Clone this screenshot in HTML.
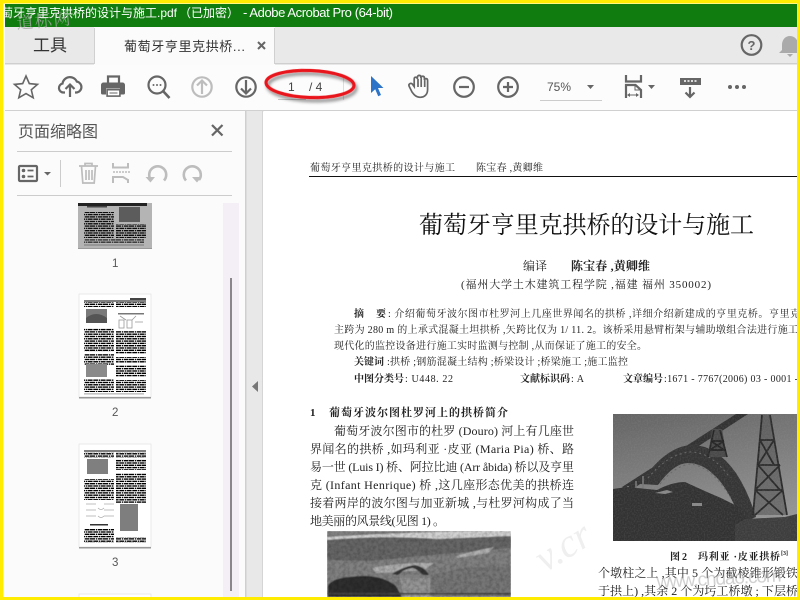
<!DOCTYPE html>
<html><head><meta charset="utf-8"><style>
html,body{margin:0;padding:0;background:#fff}
svg{display:block}
.s{font-family:"Liberation Sans","Noto Sans CJK SC",sans-serif}
.d{font-family:"Liberation Serif","Noto Serif CJK SC",serif;fill:#222}
.i{fill:none;stroke:#666;stroke-width:2.2}
.l{fill:none;stroke:#bdbdbd;stroke-width:2.2}
</style></head><body>
<svg width="800" height="600" viewBox="0 0 800 600" xmlns="http://www.w3.org/2000/svg">
<defs>
<pattern id="tx" width="13" height="4.600" patternUnits="userSpaceOnUse"><path fill="#000" d="M0 0h4v1.400H0zM4.800 0h1.500v1.400H4.800zM7 0h4.500v1.400H7zM12 0h1v1.400h-1zM0 2.300h1.600v1.400H0zM2.300 2.300h5v1.400h-5zM8 2.300h1.400v1.400H8zM10 2.300h3v1.400h-3z"/></pattern>
<pattern id="tg" width="13" height="4.600" patternUnits="userSpaceOnUse"><path fill="#111" d="M0 0h4v1.400H0zM4.800 0h1.500v1.400H4.800zM7 0h4.500v1.400H7zM12 0h1v1.400h-1zM0 2.300h1.600v1.400H0zM2.300 2.300h5v1.400h-5zM8 2.300h1.400v1.400H8zM10 2.300h3v1.400h-3z"/></pattern>
<linearGradient id="sky" x1="0" y1="0" x2="0.300" y2="1"><stop offset="0" stop-color="#646464"/><stop offset="1" stop-color="#969696"/></linearGradient>
<filter id="sh" x="-20%" y="-40%" width="140%" height="190%"><feDropShadow dx="2" dy="3" stdDeviation="1.500" flood-color="#000" flood-opacity=".45"/></filter>
<filter id="b"><feGaussianBlur stdDeviation=".6"/></filter>
<filter id="t"><feGaussianBlur stdDeviation=".35"/></filter>
<filter id="noise" x="0" y="0" width="100%" height="100%"><feTurbulence type="fractalNoise" baseFrequency=".28" numOctaves="2" seed="4"/><feColorMatrix values="0 0 0 0 0 0 0 0 0 0 0 0 0 0 0 1.800 0 0 0 -.62"/></filter>
<filter id="noise2" x="0" y="0" width="100%" height="100%"><feTurbulence type="fractalNoise" baseFrequency=".7" numOctaves="1" seed="9"/><feColorMatrix values="0 0 0 0 .4 0 0 0 0 .4 0 0 0 0 .4 1.500 0 0 0 -.6"/></filter>
<clipPath id="doc"><rect x="263" y="111" width="534" height="486"/></clipPath>
<clipPath id="side"><rect x="4" y="203" width="240" height="394"/></clipPath>
<clipPath id="bell"><rect x="770" y="28" width="27" height="36"/></clipPath>
<clipPath id="p1"><rect x="327" y="531" width="184" height="66"/></clipPath>
<clipPath id="p2"><rect x="613" y="414" width="184" height="127"/></clipPath>
</defs>

<rect width="800" height="600" fill="#fff"/>
<!-- title bar -->
<rect x="5" y="4" width="792" height="23" fill="#107c10"/>
<text class="s" x="-11" y="17" font-size="12" fill="#fff">葡萄牙亨里克拱桥的设计与施工.pdf</text>
<rect x="0" y="4" width="5" height="23" fill="#fff"/>
<text class="s" x="179" y="17" font-size="12" fill="#fff">（已加密）</text>
<text class="s" x="243" y="17" font-size="13" fill="#fff" textLength="150">- Adobe Acrobat Pro (64-bit)</text>
<!-- tab bar -->
<rect x="5" y="27" width="792" height="36" fill="#e9e9e9"/>
<rect x="5" y="63" width="792" height="1.500" fill="#cfcfcf"/>
<rect x="94" y="27" width="181" height="38" fill="#fbfbfb"/>
<rect x="94" y="28" width="1" height="36" fill="#d0d0d0"/>
<rect x="274" y="28" width="1" height="36" fill="#d0d0d0"/>
<text class="s" x="33" y="51" font-size="17" fill="#333">工具</text>
<text class="s" x="124" y="51" font-size="13" fill="#333" textLength="121">葡萄牙亨里克拱桥...</text>
<path d="M258 42l7 7M265 42l-7 7" stroke="#666" stroke-width="2" fill="none"/>
<!-- toolbar -->
<rect x="5" y="65" width="792" height="45" fill="#fcfcfc"/>
<rect x="5" y="110" width="792" height="1.500" fill="#d0d0d0"/>
<!-- star -->
<path class="i" style="stroke-width:1.600" d="M26 76l3.300 7.600 8.200.8-6.200 5.400 1.900 8-7.200-4.200-7.200 4.200 1.900-8-6.200-5.400 8.200-.8z"/>
<!-- cloud upload -->
<path class="i" d="M65 92.500h-1.500a4.500 4.500 0 0 1-1-8.900 7.500 7.500 0 0 1 14.300-2 5.500 5.500 0 0 1-.3 10.900h-1.500"/><path class="i" d="M70 97V84.500M65.500 89l4.500-4.500 4.500 4.500"/>
<!-- print -->
<path fill="none" stroke="#666" stroke-width="2.200" d="M108 83v-6.500h11V83"/>
<path fill="#666" d="M104.500 82.500h18a2.500 2.500 0 0 1 2.500 2.500v8a1.500 1.500 0 0 1-1.500 1.500h-3.500v-6h-14v6h-3.500a1.500 1.500 0 0 1-1.500-1.500v-8a2.500 2.500 0 0 1 2.500-2.500z"/>
<rect x="107.100" y="89.700" width="12.800" height="6.400" fill="#fff" stroke="#666" stroke-width="1.600"/><rect x="109.500" y="92.500" width="8" height="1" fill="#666"/>
<!-- find -->
<circle class="i" cx="157" cy="85" r="8.500"/><path d="M163 91l6.500 7" stroke="#666" stroke-width="2.600" fill="none"/><circle cx="153.500" cy="85" r="1" fill="#666"/><circle cx="157" cy="85" r="1" fill="#666"/><circle cx="160.500" cy="85" r="1" fill="#666"/>
<!-- up -->
<circle class="l" cx="202" cy="87" r="9.700"/><path class="l" d="M202 94V81M197 85.500l5-5 5 5"/>
<!-- down -->
<circle class="i" cx="246" cy="87" r="9.700"/><path class="i" d="M246 80v13M241 88.500l5 5 5-5"/>
<!-- page -->
<text class="s" x="288" y="91" font-size="12" fill="#444">1</text>
<text class="s" x="309" y="91" font-size="12" fill="#444">/ 4</text>
<rect x="278" y="99" width="28" height="1" fill="#ccc"/>
<rect x="343" y="78" width="1" height="22" fill="#ddd"/>
<ellipse cx="310" cy="84" rx="44" ry="13.500" transform="rotate(2 310 84)" fill="none" stroke="#e8141c" stroke-width="3.200" filter="url(#sh)"/>
<!-- cursor -->
<path fill="#2d74c8" d="M371 76l12.500 12h-5.500l3 7-2.800 1.200-3-7-4.200 3.800z"/>
<!-- hand -->
<path class="i" style="stroke-width:1.700" d="M412 92l-2.800-5.600c-1.200-2.600 2-4 3.400-2l1.600 2.200V79c0-2.400 3-2.400 3.200 0v-1.800c0-2.400 3.400-2.400 3.500 0V78c.2-2.300 3.400-2.300 3.500 0v2c.3-2 3.200-1.800 3.200.5v9c0 5-3 7.800-7.500 7.800-4 0-6-2.400-8.100-5.300zM418 79v8M421.200 78v9M424.700 78v9"/>
<!-- minus plus -->
<circle class="i" cx="464" cy="87" r="9.800"/><path class="i" d="M459 87h10"/>
<circle class="i" cx="508" cy="87" r="9.800"/><path class="i" d="M503 87h10M508 82v10"/>
<!-- zoom -->
<text class="s" x="547" y="91" font-size="12" fill="#555">75%</text>
<path fill="#666" d="M587 85h7l-3.500 4z"/>
<rect x="540" y="100" width="62" height="1" fill="#ccc"/>
<!-- fit -->
<path class="i" d="M626 75v6.500h15V75"/><path class="i" d="M626 98V85h9.500l5.500 5v8"/><path class="i" style="stroke-width:1" d="M635 85v5h6M628 95h10"/><path fill="#666" d="M627 95l3-2v4zM639 95l-3-2v4z"/>
<path fill="#666" d="M648 85h7l-3.500 4z"/>
<!-- keyboard -->
<rect x="680" y="78" width="21" height="7" fill="#666"/><path d="M684 81h13" stroke="#fff" stroke-width="1.500" stroke-dasharray="2 1.500"/><path class="i" d="M690 87v10M685.500 92.500l4.500 4.500 4.500-4.500"/>
<!-- more -->
<circle cx="730" cy="87" r="2" fill="#666"/><circle cx="737" cy="87" r="2" fill="#666"/><circle cx="744" cy="87" r="2" fill="#666"/>
<!-- help -->
<circle class="i" cx="751.500" cy="45" r="9.800"/><text class="s" x="747.500" y="50" font-size="13" font-weight="bold" fill="#666">?</text>
<!-- bell -->
<path clip-path="url(#bell)" fill="#aaa" d="M790 36c5 0 8 4 8 9v5l3 3h-22l3-3v-5c0-5 3-9 8-9zM787 54h6l-3 3z"/>

<!-- sidebar -->
<rect x="3" y="111" width="242" height="486" fill="#fbfbfb"/>
<rect x="245" y="111" width="1.500" height="486" fill="#cfcfcf"/>
<rect x="246.500" y="111" width="16.500" height="486" fill="#e8e8e8"/>
<rect x="262" y="111" width="1" height="486" fill="#d5d5d5"/>
<path fill="#777" d="M258 381v11l-6-5.500z"/>
<text class="s" x="18" y="137" font-size="16" fill="#555" textLength="80">页面缩略图</text>
<path d="M212 125l10.500 10.500M222.500 125L212 135.500" stroke="#666" stroke-width="2.200" fill="none"/>
<rect x="17" y="151" width="215" height="1" fill="#ccc"/>
<rect x="17" y="195" width="215" height="1" fill="#ccc"/>
<rect x="19" y="166" width="18" height="15" rx="1" class="i"/><circle cx="23.500" cy="170.500" r="1.800" fill="#666"/><circle cx="23.500" cy="176.500" r="1.800" fill="#666"/><path d="M27.500 170.500h6M27.500 176.500h6" stroke="#666" stroke-width="1.800"/>
<path fill="#666" d="M44 172h7l-3.500 3.500z"/>
<rect x="60" y="160" width="1" height="27" fill="#ccc"/>
<path class="l" style="stroke-width:1.700" d="M79 166h19M85 166v-2.500h7V166M81.500 166l1.300 17h11.400l1.300-17M86 170v10M89 170v10M92 170v10"/>
<path class="l" style="stroke-width:2" d="M113 163v4.500h15V163M113 183v-6h10l5 3v3"/><path d="M113 172h17" stroke="#bdbdbd" stroke-width="1.500" stroke-dasharray="2 1"/>
<path class="l" style="stroke-width:2.600" d="M151 180a8.500 8.500 0 1 1 13 .5"/><path fill="#bdbdbd" d="M145.500 177h9.500l-4.500 5.500z"/>
<path class="l" style="stroke-width:2.600" d="M199 180a8.500 8.500 0 1 0-13 .5"/><path fill="#bdbdbd" d="M192 177h9.500l-4.500 5.500z"/>

<g clip-path="url(#side)">
<!-- thumb1 -->
<rect x="78" y="203" width="74" height="45" fill="#b4b4b4"/>
<rect x="78" y="248" width="74" height="1" fill="#999"/>
<g filter="url(#t)">
<rect x="78" y="203" width="69" height="3" fill="#222"/>
<rect x="87" y="206" width="20" height="1.500" fill="#444"/>
<rect x="84" y="212" width="30" height="26" fill="url(#tg)"/>
<rect x="119" y="207" width="21" height="15" fill="#5c5c5c"/>
<rect x="116" y="224" width="30" height="14" fill="url(#tg)"/>
<rect x="84" y="239" width="60" height="4" fill="url(#tg)" opacity=".8"/>
<rect x="84" y="244.500" width="60" height="1" fill="#777"/>
</g>
<!-- thumb2 -->
<rect x="79" y="294" width="72" height="103" fill="#fff" stroke="#ddd" stroke-width=".6"/>
<rect x="79" y="397" width="72" height="1.500" fill="#999"/>
<g filter="url(#t)">
<rect x="84" y="300.500" width="62" height="1" fill="#000"/>
<rect x="130" y="298" width="16" height="2" fill="#444"/>
<rect x="84" y="302" width="30" height="5" fill="url(#tx)"/>
<rect x="116" y="302" width="30" height="5" fill="url(#tx)"/>
<rect x="86" y="309" width="21" height="14" fill="#7a7a7a"/>
<path d="M86 318q10-8 21 0v5H86z" fill="#555"/>
<rect x="118" y="313" width="26" height="1.500" fill="#777"/>
<g fill="none" stroke="#999" stroke-width=".8"><rect x="119" y="320" width="5" height="8"/><rect x="127" y="320" width="5" height="8"/><path d="M120 316l6 4M136 316l-4 4M135 322h8"/></g>
<rect x="84" y="328" width="30" height="24" fill="url(#tx)"/>
<rect x="116" y="331" width="30" height="23" fill="url(#tx)"/>
<rect x="84" y="354" width="30" height="11" fill="url(#tx)"/>
<rect x="86" y="364" width="21" height="13" fill="#8a8a8a"/>
<rect x="116" y="357" width="30" height="6" fill="url(#tx)"/>
<rect x="116" y="365" width="30" height="12" fill="url(#tx)"/>
<rect x="84" y="379" width="30" height="13" fill="url(#tx)"/>
<rect x="116" y="380" width="30" height="12" fill="url(#tx)"/>
<rect x="84" y="393.500" width="60" height=".8" fill="#888"/>
</g>
<!-- thumb3 -->
<rect x="79" y="444" width="72" height="103" fill="#fff" stroke="#ddd" stroke-width=".6"/>
<rect x="79" y="547" width="72" height="1.500" fill="#999"/>
<g filter="url(#t)">
<rect x="84" y="450.500" width="62" height="1" fill="#000"/>
<rect x="84" y="452" width="30" height="6" fill="url(#tx)"/>
<rect x="116" y="452" width="30" height="6" fill="url(#tx)"/>
<rect x="87" y="459" width="21" height="15" fill="#7f7f7f"/>
<rect x="116" y="459" width="30" height="11" fill="url(#tx)"/>
<rect x="84" y="479" width="30" height="21" fill="url(#tx)"/>
<rect x="116" y="473" width="30" height="30" fill="url(#tx)"/>
<g fill="none" stroke="#aaa" stroke-width=".8"><path d="M86 504h10M104 504h10M86 510h10M104 510h10M86 516h10M104 516h10M98 508q3 3 6 0M98 516q3 3 6 0"/></g>
<rect x="120" y="504" width="18" height="27" fill="#7e7e7e"/>
<rect x="90" y="524" width="18" height="1.500" fill="#333"/>
<rect x="84" y="529" width="30" height="14" fill="url(#tx)"/>
<rect x="116" y="537" width="30" height="6" fill="url(#tx)"/>
</g>
<!-- thumb4 -->
<rect x="79" y="594" width="72" height="6" fill="#fff" stroke="#ddd" stroke-width=".6"/>
</g>
<text class="s" x="112" y="267" font-size="11.500" fill="#555">1</text>
<text class="s" x="112" y="416" font-size="11.500" fill="#555">2</text>
<text class="s" x="112" y="566" font-size="11.500" fill="#555">3</text>
<rect x="223" y="203" width="16" height="394" fill="#f4eff6"/>
<rect x="230" y="278" width="2" height="313" fill="#8a868a"/>

<!-- document -->
<rect x="263.500" y="111" width="534" height="486" fill="#fff"/>
<g clip-path="url(#doc)">
<g class="d">
<text x="310" y="171" font-size="10" textLength="145">葡萄牙亨里克拱桥的设计与施工</text>
<text x="476" y="171" font-size="10" textLength="67">陈宝春 ,黄卿维</text>
<rect x="309" y="176" width="488" height="1" fill="#111"/>
<text x="419" y="233" font-size="24" fill="#111" textLength="335">葡萄牙亨里克拱桥的设计与施工</text>
<text x="523" y="270" font-size="12" textLength="24">编译</text>
<text x="571" y="270" font-size="12" font-weight="bold" textLength="79">陈宝春 ,黄卿维</text>
<text x="461" y="288" font-size="11" textLength="250">(福州大学土木建筑工程学院 ,福建 福州 350002)</text>
<text x="354" y="317" font-size="10" font-weight="bold">摘</text>
<text x="376" y="317" font-size="10" font-weight="bold">要</text>
<text x="388" y="317" font-size="10" textLength="412">: 介绍葡萄牙波尔图市杜罗河上几座世界闻名的拱桥 ,详细介绍新建成的亨里克桥。亨里克</text>
<text x="334" y="333" font-size="10" textLength="464">主跨为 280 m 的上承式混凝土坦拱桥 ,矢跨比仅为 1/ 11. 2。该桥采用悬臂桁架与辅助墩组合法进行施工</text>
<text x="334" y="349" font-size="10" textLength="313">现代化的监控设备进行施工实时监测与控制 ,从而保证了施工的安全。</text>
<text x="354" y="365" font-size="10" font-weight="bold">关键词</text>
<text x="387" y="365" font-size="10" textLength="241">:拱桥 ;钢筋混凝土结构 ;桥梁设计 ;桥梁施工 ;施工监控</text>
<text x="354" y="382" font-size="10" font-weight="bold" textLength="50">中图分类号</text>
<text x="405" y="382" font-size="10" textLength="48">: U448. 22</text>
<text x="520" y="382" font-size="10" font-weight="bold" textLength="50">文献标识码</text>
<text x="571" y="382" font-size="10" textLength="13">:A</text>
<text x="623" y="382" font-size="10" font-weight="bold" textLength="40">文章编号</text>
<text x="664" y="382" font-size="10" textLength="134">:1671 - 7767(2006) 03 - 0001 -</text>
<text x="310" y="416" font-size="11" font-weight="bold">1</text>
<text x="329" y="416" font-size="11" font-weight="bold" textLength="179">葡萄牙波尔图杜罗河上的拱桥简介</text>
<text x="334" y="435" font-size="12" textLength="240">葡萄牙波尔图市的杜罗 (Douro) 河上有几座世</text>
<text x="310" y="453" font-size="12" textLength="264">界闻名的拱桥 ,如玛利亚 ·皮亚 (Maria Pia) 桥、路</text>
<text x="310" y="471" font-size="12" textLength="264">易一世 (Luis I) 桥、阿拉比迪 (Arr åbida) 桥以及亨里</text>
<text x="310" y="489" font-size="12" textLength="264">克 (Infant Henrique) 桥 ,这几座形态优美的拱桥连</text>
<text x="310" y="507" font-size="12" textLength="264">接着两岸的波尔图与加亚新城 ,与杜罗河构成了当</text>
<text x="310" y="525" font-size="12" textLength="135">地美丽的风景线(见图 1) 。</text>
<text x="670" y="560" font-size="10" font-weight="bold" textLength="17">图 2</text>
<text x="698" y="560" font-size="10" font-weight="bold" textLength="82">玛利亚 ·皮亚拱桥</text>
<text x="781" y="555" font-size="6" font-weight="bold">[3]</text>
<text x="598" y="577" font-size="12" textLength="200">个墩柱之上 ,其中 5 个为截棱锥形锻铁</text>
<text x="598" y="595" font-size="12" textLength="200">于拱上) ,其余 2 个为圬工桥墩 ; 下层桥</text>
</g>
<!-- photo 1 -->
<g clip-path="url(#p1)">
<g filter="url(#b)">
<rect x="327" y="531" width="184" height="66" fill="#808080"/>
<path d="M327 537q90-6 184-6v6q-40 6-60 4-60-4-124 2z" fill="#d2d2d2"/>
<path d="M327 540q60-5 110-1l74-3v12l-30 3-50 4-60 6-44-1z" fill="#666"/>
<path d="M456 556q14-4 28-7l10-2-6 6-30 5zM372 568q30-6 62-5l-10 7q-25 2-48 3z" fill="#b0b0b0"/>
<path d="M392 574q10-7 23-9 10 2 14 10l-6 0q-7-7-11-7-8 1-14 7z" fill="#383838"/>
<path d="M400 578h30v19h-26z" fill="#949494"/>
<path d="M328 586q4-8 22-9 30-4 46 9l6 11h-74z" fill="#2e2e2e"/>
<path d="M430 575l40-8 41 0v30h-78z" fill="#767676"/>
<path d="M327 593h184v1.500H327z" fill="#444"/>
</g>
<rect x="327" y="531" width="184" height="66" filter="url(#noise)" opacity=".22"/>
</g>
<!-- photo 2 -->
<g clip-path="url(#p2)">
<g filter="url(#t)">
<rect x="613" y="414" width="184" height="127" fill="url(#sky)"/>
<path d="M622 487L736 414h12L628 492z" fill="#333"/>
<path d="M640 484q25-38 52-39 24 0 44 28 12 18 20 44l-14 6q-14-36-28-48-12-12-26-12-14 0-30 22z" fill="#353535"/>
<path d="M648 478q20-24 42-26 22 0 40 26M660 484q15-18 30-20 22 2 42 36" fill="none" stroke="#666" stroke-width="1" stroke-dasharray="2 3"/>
<path d="M628 486v10M636 481v10M643 476v12" stroke="#777" stroke-width="1.600"/>
<!-- small tower -->
<path d="M712 429h10l5 28h-19z" fill="#4a4a4a"/>
<path d="M714 430l-6 27M720 430l7 27M711 441h13M710 450h16M711 441l13 9M724 441l-14 9" stroke="#262626" stroke-width="1.700" fill="none"/>
<!-- big tower -->
<path d="M762 415h8l17 100h-34z" fill="#555" fill-opacity=".6"/>
<path d="M762 415l-9 100M770 415l17 100M760 440h14M758 465h22M755 490h28M760 440l14 25M774 440l-16 25M758 465l22 25M780 465l-25 25M755 490l28 25M783 490l-28 25" stroke="#2c2c2c" stroke-width="1.800" fill="none"/>
<path d="M613 489l14-2 30 3q15-8 28-8l22 10 14 6 16 8 12 14 6 12 60-4v13H613z" fill="#333"/>
<path d="M655 493l12-3 6 2-8 2zM692 503h10v3h-10z" fill="#888"/>
<path d="M735 525l10-6 40-2 12-3v27h-62z" fill="#3e3e3e"/>
</g>
<rect x="613" y="414" width="184" height="127" filter="url(#noise2)" opacity=".25"/>
</g>
<!-- watermarks -->
<text x="530" y="560" font-size="40" font-style="italic" fill="#efefef" font-family="Liberation Serif,serif" transform="rotate(-32 560 540)">v.cr</text>
<text x="657" y="588" font-size="19" fill="#999" fill-opacity=".45" font-family="Liberation Sans,sans-serif" textLength="125" transform="rotate(-3 657 588)">www.cndao.com</text>
</g>
<!-- logo watermark -->
<text x="17" y="29" font-size="17" fill="#a8a8a8" fill-opacity=".8" font-family="Liberation Serif,Noto Serif CJK SC,serif" textLength="54" transform="rotate(-5 17 29)">道标网</text>
<!-- yellow frame -->
<path fill="#ffec00" fill-rule="evenodd" d="M0 0h800v600H0zM3.500 3.500V597h793.500V3.500z"/>
</svg>
</body></html>
